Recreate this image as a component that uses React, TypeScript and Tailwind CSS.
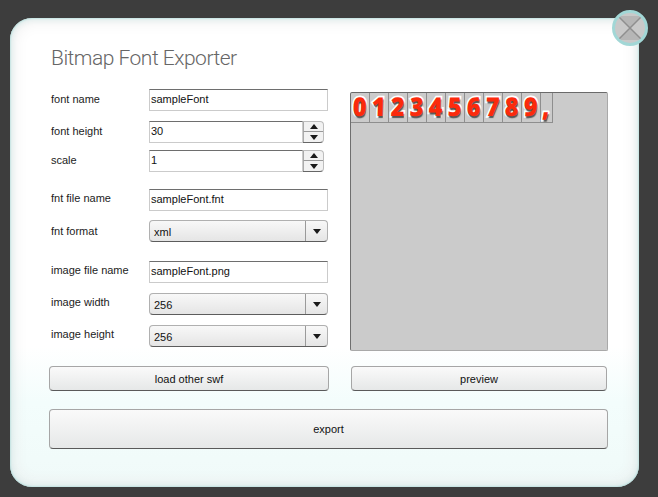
const font = "font-['Liberation_Sans',Arial,sans-serif]"

function Arrow({ up = false }: { up?: boolean }) {
  return (
    <svg width="8" height="5" viewBox="0 0 8 5" className="block">
      <path d={up ? 'M4 0L8 5H0Z' : 'M0 0H8L4 5Z'} fill="#1a1a1a" />
    </svg>
  )
}

function Label({ text, className = '' }: { text: string; className?: string }) {
  return <div className={`w-[100px] pl-[2px] text-[11px] text-[#1c1c1c] ${className}`}>{text}</div>
}

function TextField({ value, className = 'w-[179px]' }: { value: string; className?: string }) {
  return (
    <input
      readOnly
      value={value}
      className={`h-[22px] ${className} border border-[#cbcbcb] border-t-[#6e6e6e] bg-white px-[1px] pb-[3px] text-[11px] text-[#111] outline-none`}
    />
  )
}

function Spinner({ value }: { value: string }) {
  return (
    <div className="flex">
      <TextField value={value} className="w-[154px]" />
      <div className="flex h-[22px] w-[21px] flex-col rounded-r-[4px] border border-l-0 border-[#bdbdbd] border-b-[#666] bg-[#f2f2f2]">
        <div className="flex h-[10px] items-center justify-center border-b border-b-[#999] border-l border-l-[#aaa]">
          <Arrow up />
        </div>
        <div className="flex flex-1 items-center justify-center border-l border-l-[#aaa]">
          <Arrow />
        </div>
      </div>
    </div>
  )
}

function Select({ value }: { value: string }) {
  return (
    <div className="flex h-[22px] w-[179px] items-center rounded-[4px] border border-[#b0b0b0] border-b-[#5c5c5c] bg-gradient-to-b from-[#f8f8f8] to-[#e5e5e5] text-[11px] text-[#111]">
      <span className="flex-1 pl-[4px] pt-[3px]">{value}</span>
      <div className="flex h-full w-[22px] items-center justify-center border-l border-l-[#9a9a9a]">
        <Arrow />
      </div>
    </div>
  )
}

function Button({ text, className }: { text: string; className: string }) {
  return (
    <div className={`flex items-center justify-center rounded-[4px] border border-[#a6a6a6] border-b-[#5a5a5a] bg-gradient-to-b from-[#fafafa] to-[#e6e8e8] pt-[1px] text-[11px] text-[#111] ${className}`}>
      {text}
    </div>
  )
}

const glyphs = ['0', '1', '2', '3', '4', '5', '6', '7', '8', '9', ',']

export default function App() {
  return (
    <div className={`h-[497px] w-[658px] overflow-hidden bg-[#3d3d3d] pl-[10px] pt-[18px] ${font}`}>
      <div className="relative h-[469px] w-[629px] rounded-[22px] bg-[linear-gradient(180deg,#ffffff_0%,#ffffff_70%,#f3fdfc_82%,#f0faf9_100%)] pl-[39px] pt-[25px] shadow-[inset_0_0_2px_#8fd0ce,inset_0_0_7px_#cfe9e8,inset_0_0_18px_#e6e6e6]">
        <div className="h-[31px] pl-[2px] font-['Roboto',sans-serif] text-[21px] leading-[31px] font-light tracking-[-0.5px] text-[#666]">
          Bitmap Font Exporter
        </div>

        <div className="mt-[15px] flex">
          <div className="w-[280px]">
            <div className="flex items-center">
              <Label text="font name" className="mb-[2px]" />
              <TextField value="sampleFont" />
            </div>
            <div className="mt-[10px] flex items-center">
              <Label text="font height" className="mb-[2px]" />
              <Spinner value="30" />
            </div>
            <div className="mt-[7px] flex items-center">
              <Label text="scale" className="mb-[2px]" />
              <Spinner value="1" />
            </div>
            <div className="mt-[17px] flex items-center">
              <Label text="fnt file name" className="mb-[4px]" />
              <TextField value="sampleFont.fnt" />
            </div>
            <div className="mt-[9px] flex items-center">
              <Label text="fnt format" />
              <Select value="xml" />
            </div>
            <div className="mt-[19px] flex items-center">
              <Label text="image file name" className="mb-[3px]" />
              <TextField value="sampleFont.png" />
            </div>
            <div className="mt-[10px] flex items-center">
              <Label text="image width" className="mb-[4px]" />
              <Select value="256" />
            </div>
            <div className="mt-[10px] flex items-center">
              <Label text="image height" className="mb-[4px]" />
              <Select value="256" />
            </div>
          </div>

          <div className="ml-[21px] mt-[3px] h-[259px] w-[258px] rounded-[2px] border border-[#a9a9a9] border-t-[#6a6a6a] border-l-[#6f6f6f] bg-[#cbcbcb]">
            <div className="flex">
              {glyphs.map(g => (
                <div
                  key={g}
                  className={`flex h-[30px] ${g === ',' ? 'w-[12px]' : 'w-[19px]'} items-center justify-center border-r border-b border-[#8e8e8e] pb-[3px] font-['Open_Sans',sans-serif] text-[26px] font-extrabold text-[#fb2a0c] [paint-order:stroke_fill] [-webkit-text-stroke:3.5px_#fff] [text-shadow:1px_2px_1px_#555]`}
                >
                  <span className="inline-block scale-x-[0.9] skew-x-[-2deg]">{g}</span>
                </div>
              ))}
            </div>
          </div>
        </div>

        <div className="mt-[15px] flex">
          <Button text="load other swf" className="h-[25px] w-[280px]" />
          <Button text="preview" className="ml-[22px] h-[25px] w-[256px]" />
        </div>

        <Button text="export" className="mt-[18px] h-[40px] w-[559px]" />

        <div className="absolute right-[-9px] top-[-8px] flex h-[36px] w-[36px] items-center justify-center overflow-hidden rounded-full border-[3px] border-[#a2d7d6] bg-[#c9c9c9]">
          <svg width="30" height="30" viewBox="0 0 30 30">
            <path d="M3 3H27L15 15ZM3 27H27L15 15Z" fill="#b6b6b6" />
            <path d="M3 3L27 27M27 3L3 27" stroke="#8f8f8f" strokeWidth="1.5" />
          </svg>
        </div>
      </div>
    </div>
  )
}
